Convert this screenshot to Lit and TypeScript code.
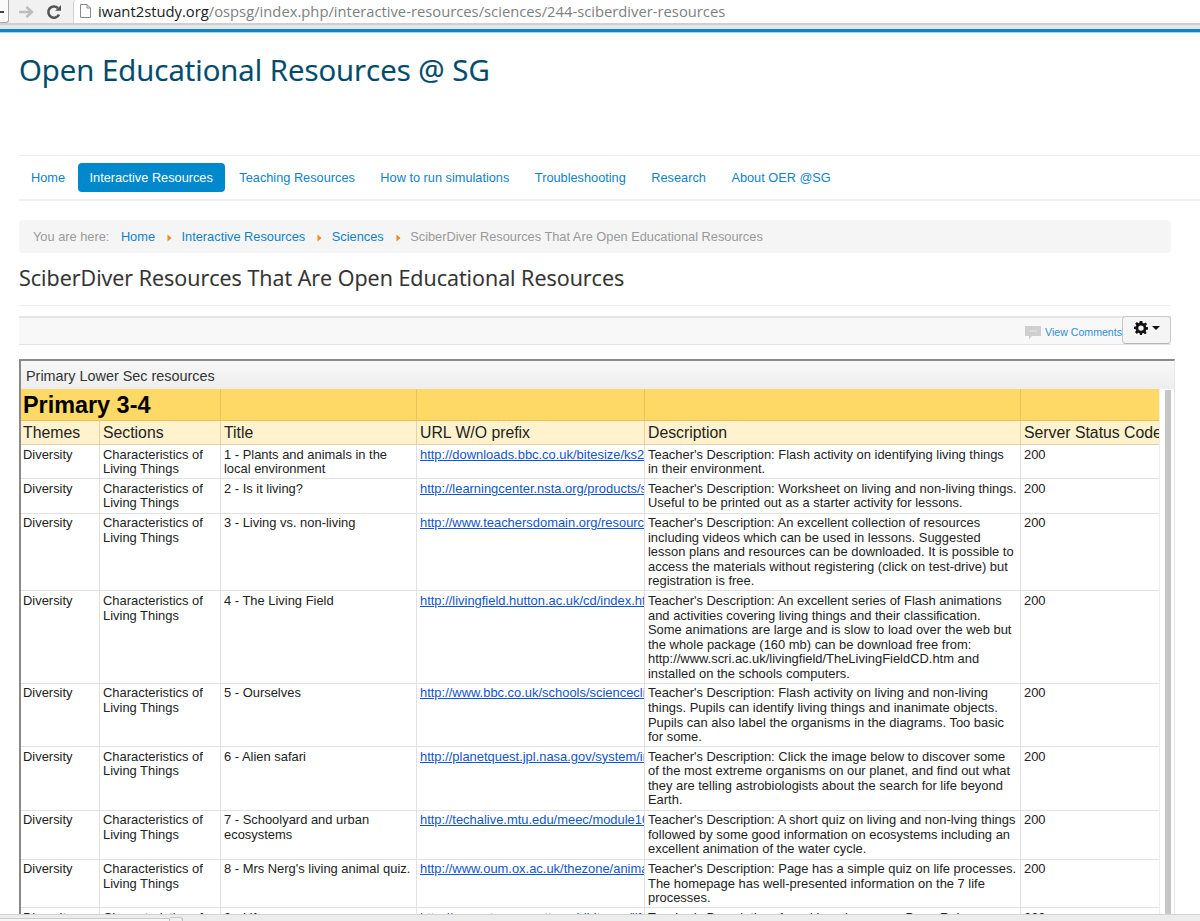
import { LitElement, html, css, svg } from "lit";
import { customElement } from "lit/decorators.js";

const D = "Diversity";
const C = "Characteristics of Living Things";
const rows: [string, string, string, string, string][] = [
  [D, C, "1 - Plants and animals in the local environment", "http://downloads.bbc.co.uk/bitesize/ks2/science/living_things.swf", "Teacher's Description: Flash activity on identifying living things in\u00a0their environment."],
  [D, C, "2 - Is it living?", "http://learningcenter.nsta.org/products/symposia_seminars", "Teacher's Description: Worksheet on living and non-living things. Useful to be printed out as a starter activity for lessons."],
  [D, C, "3 - Living vs. non-living", "http://www.teachersdomain.org/resource/tdc02.sci.life", "Teacher's Description: An excellent collection of resources including videos which can be used in lessons. Suggested lesson plans and resources can be downloaded. It is possible to access the materials without registering (click on test-drive) but registration is free."],
  [D, C, "4 - The Living Field", "http://livingfield.hutton.ac.uk/cd/index.htm", "Teacher's Description: An excellent series of Flash animations and activities covering living things and their classification. Some\u00a0animations are large and is slow to load over the web but the whole package (160 mb) can be download free from: http://www.scri.ac.uk/livingfield/TheLivingFieldCD.htm and installed on the schools computers."],
  [D, C, "5 - Ourselves", "http://www.bbc.co.uk/schools/scienceclips/ages/5_6/ourselves", "Teacher's Description: Flash activity on living and non-living things. Pupils can identify living things and inanimate objects. Pupils can also label the organisms in the diagrams. Too basic for some."],
  [D, C, "6 - Alien safari", "http://planetquest.jpl.nasa.gov/system/interactable/alien", "Teacher's Description: Click the image below to discover some of\u00a0the most extreme organisms on our planet, and find out what they are telling astrobiologists about the search for life beyond Earth."],
  [D, C, "7 - Schoolyard and urban ecosystems", "http://techalive.mtu.edu/meec/module10/title.htm", "Teacher's Description: A short quiz on living and non-lving things followed by some good information on ecosystems including an excellent animation of the water cycle."],
  [D, C, "8 - Mrs Nerg's living animal quiz.", "http://www.oum.ox.ac.uk/thezone/animals/animalid", "Teacher's Description: Page has a simple quiz on life processes. The homepage has well-presented information on the 7 life processes."],
  [D, C, "9 - Life", "http://www.strangematterexhibit.com/life", "Teacher's Description: A cool learning game, Deep Rabe."],
];

const nav = ["Home", "Interactive Resources", "Teaching Resources", "How to run simulations", "Troubleshooting", "Research", "About OER @SG"];

const sep = svg`<svg class="sep" viewBox="0 0 5 8" width="5" height="8"><path d="M0.5 0.5 L4.5 4 L0.5 7.5 Z" fill="#f08a1d"/></svg>`;

@customElement("app-root")
export class AppRoot extends LitElement {
  static styles = css`
    :host { display: flex; flex-direction: column; width: 1200px; height: 921px; overflow: hidden; background: #fff; font-family: "Liberation Sans", Arial, sans-serif; }
    .chrome { flex: none; height: 23px; background: #f1f1f1; display: flex; align-items: center; }
    .back { width: 9px; height: 23px; flex: none; background: #fbfbfb; border: 1px solid #a8a8a8; border-left: 0; border-top: 0; border-radius: 0 0 3px 0; box-sizing: border-box; display: flex; align-items: center; }
    .back i { display: block; width: 4px; height: 2px; background: #444; margin-top: 1px; }
    .fwd { margin-left: 9px; flex: none; display: block; }
    .reload { margin-left: 12px; flex: none; display: block; }
    .addr { margin-left: 11px; flex: 1; height: 23px; background: #fff; border-left: 1px solid #d0d0d0; border-radius: 3px 0 0 0; display: flex; align-items: center; box-sizing: border-box; padding: 0 0 1px 6px; font: 14.77px "Open Sans", "Noto Sans", sans-serif; white-space: nowrap; }
    .addr svg { margin-right: 7px; flex: none; }
    .host-name { color: #222; }
    .path { color: #808080; }
    .gap1 { flex: none; height: 2px; background: #cfcfcf; }
    .gap2 { flex: none; height: 4px; background: #e6e6e6; }
    .bluebar { flex: none; height: 4px; box-sizing: border-box; background: #0f82c3; border-bottom: 1px solid #a9d4ee; }
    main { flex: 1; min-height: 0; overflow: hidden; padding: 0 29px 0 19px; box-sizing: border-box; }
    h1 { margin: 15px 0 0; height: 44px; font: 400 29.4px/44px "Open Sans", "Noto Sans", sans-serif; color: #004b6b; -webkit-text-stroke: 0.2px #004b6b; }
    nav { margin-top: 63px; width: 1181px; height: 46px; box-sizing: border-box; border-top: 1px solid #eeeeee; border-bottom: 2px solid #eeeeee; display: flex; align-items: center; gap: 1.5px; font-size: 12.75px; }
    nav a { color: #0f82c9; padding: 0 12px; height: 29px; line-height: 29px; border-radius: 4px; white-space: nowrap; }
    nav a.active { background: #0088cc; color: #fff; margin: 0 1px 0 -1px; }
    .crumb { margin-top: 19px; height: 33px; background: #f5f5f5; border-radius: 4px; display: flex; align-items: center; padding-left: 14px; font-size: 12.8px; color: #999; white-space: nowrap; }
    .crumb a { color: #0f82c9; }
    .crumb .here { margin-right: 11.5px; }
    .sep { margin: 3px 9.5px 0 12px; }
    h2 { margin: 9px 0 0; height: 44px; box-sizing: border-box; border-bottom: 1px solid #eeeeee; font: 400 21.5px/32px "Open Sans", "Noto Sans", sans-serif; color: #333; -webkit-text-stroke: 0.15px #333; }
    .tools { margin-top: 10px; height: 29px; box-sizing: border-box; border-top: 2px solid #e6e6e6; border-bottom: 1px solid #e3e3e3; background: #f8f8f8; display: flex; justify-content: flex-end; align-items: center; padding-top: 2px; font-size: 10.6px; }
    .tools a { color: #2f8fd0; margin-left: 4px; margin-top: -1px; }
    .tools svg.bubble { margin-top: 2px; }
    .gear { width: 49px; height: 28px; margin-top: -5px; box-sizing: border-box; border: 1px solid #c8c8c8; border-bottom-color: #b5b5b5; border-radius: 4px; background: #f5f5f5; display: flex; align-items: center; justify-content: center; gap: 4px; padding-bottom: 3px; }
    .caret { width: 0; height: 0; border: 4px solid transparent; border-top-color: #111; border-bottom: 0; }
    .frame { margin-top: 14px; width: 1156px; box-sizing: border-box; border-top: 2px solid #8a8a8a; border-left: 2px solid #8a8a8a; border-right: 1px solid #e8e8e8; }
    .cap { height: 28px; box-sizing: border-box; padding: 2px 0 0 5px; background: linear-gradient(#f8f8f8, #eeeeee); display: flex; align-items: center; font-size: 14.4px; color: #333; }
    .sheet { display: flex; }
    table { flex: none; table-layout: fixed; width: 1138px; border-collapse: separate; border-spacing: 0; color: #222; }
    td { font-size: 12.93px; line-height: 14.55px; padding: 2.5px 0 1.7px 3px; border-right: 1px solid #e2e2e2; border-bottom: 1px solid #e2e2e2; vertical-align: top; overflow: hidden; }
    td:first-child { padding-left: 2px; }
    tr.band td { background: #ffd966; height: 32px; box-sizing: border-box; padding: 1px 2px 0; border-color: #e6c35c; font-size: 23.4px; font-weight: 700; color: #000; line-height: 30px; vertical-align: middle; white-space: nowrap; }
    tr.head td { background: #fff2cc; height: 24px; box-sizing: border-box; padding: 2px 0 0 3px; border-color: #e2d3a6; font-size: 15.8px; line-height: 20px; color: #222; white-space: nowrap; }
    tr.head td:first-child { padding-left: 2px; }
    td.url { white-space: nowrap; }
    td.url a { color: #1155cc; text-decoration: underline; }
    td:last-child { border-right: 0; }
    .track { flex: 1; background: #fff; border-left: 1px solid #eee; padding: 1px 3px 0 5px; }
    .thumb { height: 100%; background: #c6c6c6; }
    .foot { flex: none; height: 7px; background: #ececec; border-top: 1px solid #d4d4d4; box-sizing: border-box; display: flex; align-items: flex-end; }
    .foot span { width: 170px; height: 3px; box-sizing: border-box; background: #f6f6f6; border-right: 1px solid #bbb; border-top: 1px solid #ccc; }
    .foot b { width: 13px; height: 4px; box-sizing: border-box; background: #f0f0f0; border-right: 1px solid #bbb; border-top: 1px solid #ccc; border-radius: 0 3px 0 0; }
  `;

  render() {
    const host = "iwant2study.org";
    const path = "/ospsg/index.php/interactive-resources/sciences/244-sciberdiver-resources";
    return html`
      <div class="chrome">
        <div class="back"><i></i></div>
        <svg class="fwd" width="16" height="14" viewBox="0 0 16 14"><path d="M1 7 H13 M8.5 2 L14 7 L8.5 12" fill="none" stroke="#bcbcbc" stroke-width="2.4"/></svg>
        <svg class="reload" width="16" height="16" viewBox="0 0 16 16"><path d="M13 10.5 A5.6 5.6 0 1 1 11.8 4" fill="none" stroke="#555" stroke-width="2.6"/><path d="M9.2 6.8 L15 6.8 L15 1 Z" fill="#555"/></svg>
        <div class="addr">
          <svg width="11" height="14" viewBox="0 0 11 14"><path d="M0.5 0.5 H7 L10.5 4 V13.5 H0.5 Z M7 0.5 V4 H10.5" fill="#fff" stroke="#8a8a8a"/></svg>
          <span class="host-name">${host}</span><span class="path">${path}</span>
        </div>
      </div>
      <div class="gap1"></div>
      <div class="gap2"></div>
      <div class="bluebar"></div>
      <main>
        <h1>Open Educational Resources @ SG</h1>
        <nav>
          ${nav.map((n) => html`<a class=${n === "Interactive Resources" ? "active" : ""}>${n}</a>`)}
        </nav>
        <div class="crumb">
          <span class="here">You are here:</span>
          <a>Home</a>${sep}<a>Interactive Resources</a>${sep}<a>Sciences</a>${sep}<span>SciberDiver Resources That Are Open Educational Resources</span>
        </div>
        <h2>SciberDiver Resources That Are Open Educational Resources</h2>
        <div class="tools">
          <svg class="bubble" width="16" height="14" viewBox="0 0 16 14"><path d="M0 0 H16 V10 H7 L4 13.5 V10 H0 Z" fill="#cfcfcf"/><path d="M5 5 h1.2 M7.5 5 h1.2 M10 5 h1.2" stroke="#fff" stroke-width="1.2"/></svg>
          <a>View Comments</a>
          <div class="gear">
            <svg width="14" height="14" viewBox="0 0 14 14"><path fill="#111" fill-rule="evenodd" d="M5.7 0 H8.3 L8.7 1.9 L10 2.5 L11.7 1.4 L13.1 3.2 L11.7 4.6 L12.1 6 L14 6.3 V8.5 L12.1 8.9 L11.6 10.2 L12.7 11.9 L11 13.3 L9.5 12 L8.3 12.3 L8 14 H6 L5.6 12.2 L4.3 11.7 L2.8 12.9 L1 11.1 L2.2 9.6 L1.7 8.3 L0 8 V5.8 L1.8 5.5 L2.3 4.2 L1.2 2.6 L2.9 1.1 L4.4 2.2 L5.4 1.8 Z M7 4.4 A2.7 2.7 0 1 0 7 9.8 A2.7 2.7 0 1 0 7 4.4 Z"/></svg>
            <span class="caret"></span>
          </div>
        </div>
        <div class="frame">
          <div class="cap">Primary Lower Sec resources</div>
          <div class="sheet">
            <table>
              <colgroup><col style="width:79px"/><col style="width:121px"/><col style="width:196px"/><col style="width:228px"/><col style="width:376px"/><col style="width:138px"/></colgroup>
              <tr class="band"><td colspan="2">Primary 3-4</td><td></td><td></td><td></td><td></td></tr>
              <tr class="head"><td>Themes</td><td>Sections</td><td>Title</td><td>URL W/O prefix</td><td>Description</td><td>Server Status Code</td></tr>
              ${rows.map((r) => html`<tr><td>${r[0]}</td><td>${r[1]}</td><td>${r[2]}</td><td class="url"><a>${r[3]}</a></td><td>${r[4]}</td><td>200</td></tr>`)}
            </table>
            <div class="track"><div class="thumb"></div></div>
          </div>
        </div>
      </main>
      <div class="foot"><span></span><b></b></div>
    `;
  }
}
